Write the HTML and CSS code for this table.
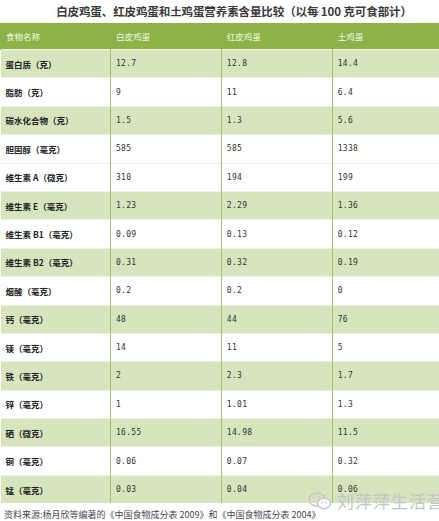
FILE: index.html
```html
<!DOCTYPE html>
<html lang="zh">
<head>
<meta charset="utf-8">
<link rel="stylesheet" href="styles.css">
</head>
<body>
<div class="page">
  <h1 class="title">白皮鸡蛋、红皮鸡蛋和土鸡蛋营养素含量比较（以每 100 克可食部计）</h1>
  <div class="table-wrap">
    <table class="nutri">
      <thead>
        <tr><th>食物名称</th><th>白皮鸡蛋</th><th>红皮鸡蛋</th><th>土鸡蛋</th></tr>
      </thead>
      <tbody>
        <tr class="g"><td>蛋白质（克）</td><td>12.7</td><td>12.8</td><td>14.4</td></tr>
        <tr><td>脂肪（克）</td><td>9</td><td>11</td><td>6.4</td></tr>
        <tr class="g"><td>碳水化合物（克）</td><td>1.5</td><td>1.3</td><td>5.6</td></tr>
        <tr><td>胆固醇（毫克）</td><td>585</td><td>585</td><td>1338</td></tr>
        <tr><td>维生素 A（微克）</td><td>310</td><td>194</td><td>199</td></tr>
        <tr class="g"><td>维生素 E（毫克）</td><td>1.23</td><td>2.29</td><td>1.36</td></tr>
        <tr><td>维生素 B1（毫克）</td><td>0.09</td><td>0.13</td><td>0.12</td></tr>
        <tr class="g"><td>维生素 B2（毫克）</td><td>0.31</td><td>0.32</td><td>0.19</td></tr>
        <tr><td>烟酸（毫克）</td><td>0.2</td><td>0.2</td><td>0</td></tr>
        <tr class="g"><td>钙（毫克）</td><td>48</td><td>44</td><td>76</td></tr>
        <tr><td>镁（毫克）</td><td>14</td><td>11</td><td>5</td></tr>
        <tr class="g"><td>铁（毫克）</td><td>2</td><td>2.3</td><td>1.7</td></tr>
        <tr><td>锌（毫克）</td><td>1</td><td>1.01</td><td>1.3</td></tr>
        <tr class="g"><td>硒（微克）</td><td>16.55</td><td>14.98</td><td>11.5</td></tr>
        <tr><td>铜（毫克）</td><td>0.06</td><td>0.07</td><td>0.32</td></tr>
        <tr class="g"><td>锰（毫克）</td><td>0.03</td><td>0.04</td><td>0.06</td></tr>
      </tbody>
    </table>
    <div class="watermark">
      <svg class="wm-icon" width="24" height="18" viewBox="0 0 24 18">
        <ellipse cx="9" cy="7.5" rx="8" ry="6.5" fill="none" stroke="#c8c8c8" stroke-width="1.6"/>
        <ellipse cx="16" cy="11.5" rx="6.5" ry="5.2" fill="#ffffff" stroke="#c8c8c8" stroke-width="1.6"/>
        <circle cx="6.3" cy="5.6" r="1.1" fill="#c8c8c8"/>
        <circle cx="11.3" cy="5.6" r="1.1" fill="#c8c8c8"/>
        <circle cx="14" cy="10.5" r="0.9" fill="#c8c8c8"/>
        <circle cx="18.2" cy="10.5" r="0.9" fill="#c8c8c8"/>
      </svg>
      <span class="wm-text">刘萍萍生活营养</span>
    </div>
  </div>
  <p class="source">资料来源:杨月欣等编著的《中国食物成分表 2009》和《中国食物成分表 2004》</p>
</div>
</body>
</html>
```

FILE: styles.css
```css
html, body {
  margin: 0;
  padding: 0;
  background: #ffffff;
  overflow: hidden;
}
.page {
  width: 439px;
  height: 521px;
  overflow: hidden;
  font-family: "Noto Sans CJK SC", "Noto Sans", sans-serif;
}
.title {
  margin: 0;
  height: 23px;
  padding-left: 29px;
  line-height: 23px;
  font-size: 11.5px;
  font-weight: bold;
  color: #3a3a3a;
  text-align: center;
  white-space: nowrap;
  letter-spacing: -0.1px;
}
.table-wrap {
  position: relative;
  width: 439px;
}
.nutri {
  border-collapse: collapse;
  width: 443px;
  table-layout: fixed;
  font-size: 8.5px;
}
.nutri th {
  background: #8db346;
  color: #f2f7e8;
  font-weight: normal;
  text-align: left;
  height: 26px;
  padding: 0 0 0 5px;
  border-left: 1px solid #8db346;
  font-size: 8.5px;
}
.nutri th:first-child, .nutri td:first-child {
  width: 104px;
}
.nutri td {
  height: 27.4px;
  padding: 0 0 0 5px;
  border-left: 1px solid #a4c06f;
  border-top: 1px solid #edf2e4;
  color: #333333;
  font-family: "DejaVu Sans Mono", "Liberation Mono", monospace;
  font-size: 8px;
  letter-spacing: 0.3px;
}
.nutri td:first-child {
  border-left: none;
  font-family: "Noto Sans CJK SC", sans-serif;
  font-weight: bold;
  color: #222222;
  font-size: 8.5px;
  letter-spacing: 0;
}
.nutri tr.g td {
  background: #d6e5bd;
}
.watermark {
  position: absolute;
  left: 308px;
  top: 465px;
  display: flex;
  align-items: center;
  gap: 5px;
  white-space: nowrap;
}
.wm-text {
  font-family: "Noto Sans CJK SC", sans-serif;
  font-size: 17px;
  color: #c4c4c4;
  letter-spacing: 1px;
}
.source {
  margin: 0;
  padding: 5px 0 0 4px;
  font-size: 9px;
  color: #4a4a4a;
  white-space: nowrap;
}
```
